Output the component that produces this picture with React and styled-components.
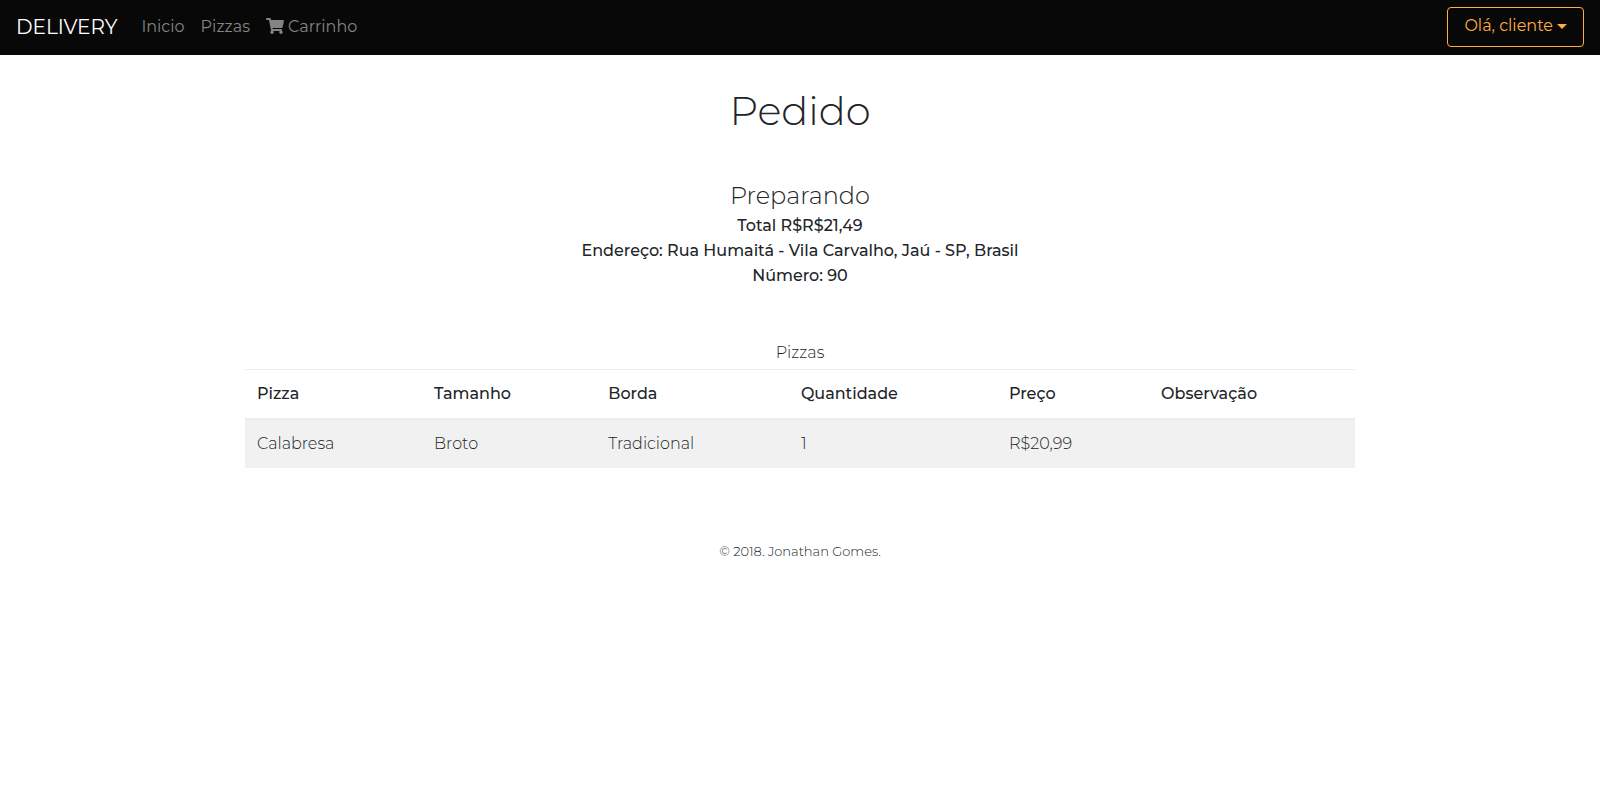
import React from "react";
import styled, { createGlobalStyle } from "styled-components";
import { FaShoppingCart } from "react-icons/fa";

const GlobalStyle = createGlobalStyle`
  *, *::before, *::after { box-sizing: border-box; }
  body {
    margin: 0;
    background: #fff;
    color: #212529;
    font-family: Montserrat, Inter, "Open Sans", sans-serif;
    font-size: 16px;
    font-weight: 300;
    line-height: 25px;
  }
`;

const Navbar = styled.header`
  display: flex;
  align-items: center;
  padding: 7px 16px 8px;
  background: #080808;
`;

const Brand = styled.a`
  margin-right: 16px;
  color: #fff;
  font-size: 20px;
  font-weight: 400;
  line-height: 30px;
  text-decoration: none;
`;

const Nav = styled.nav`
  display: flex;
  flex: 1;
`;

const NavLink = styled.a`
  display: inline-flex;
  align-items: center;
  gap: 4px;
  padding: 0 8px 2px;
  color: #848484;
  font-weight: 400;
  text-decoration: none;
`;

const UserButton = styled.button`
  display: inline-flex;
  align-items: center;
  gap: 4px;
  height: 40px;
  padding: 0 16px 4px;
  border: 1px solid #ffac41;
  border-radius: 4px;
  background: transparent;
  color: #ffac41;
  font: inherit;
  font-weight: 400;
  cursor: pointer;
`;

const Caret = styled.span`
  margin-top: 2px;
  border: 5px solid transparent;
  border-top-color: currentColor;
  border-bottom: 0;
`;

const Container = styled.main`
  width: 100%;
  max-width: 1140px;
  margin: 0 auto;
  padding: 32px 15px 0;
  text-align: center;
`;

const Title = styled.h1`
  margin: 0 0 48px;
  font-size: 40px;
  font-weight: 350;
  line-height: 48px;
`;

const Status = styled.h2`
  margin: 0 0 5px;
  font-size: 24px;
  font-weight: 350;
  line-height: 25px;
`;

const Summary = styled.section`
  margin-bottom: 48px;
`;

const Detail = styled.p`
  margin: 0;
  font-weight: 500;
`;

const Table = styled.table`
  width: 100%;
  table-layout: fixed;
  border-collapse: collapse;
  text-align: left;
`;

const Caption = styled.caption`
  padding: 4px 0;
  text-align: center;
`;

const Column = styled.col`
  width: ${({ $share }) => $share}%;
`;

const HeadCell = styled.th`
  padding: 12px;
  border-top: 1px solid #ececec;
  border-bottom: 2px solid #ececec;
  font-weight: 500;
  line-height: 24px;
`;

const Cell = styled.td`
  padding: 12px;
  background: #f1f1f1;
  line-height: 24px;
`;

const Footer = styled.footer`
  padding: 73px 16px 24px;
  font-size: 13px;
  line-height: 20px;
  text-align: center;
`;

const columns = [
  { name: "Pizza", share: 15.95 },
  { name: "Tamanho", share: 15.7 },
  { name: "Borda", share: 17.35 },
  { name: "Quantidade", share: 18.75 },
  { name: "Preço", share: 13.7 },
  { name: "Observação", share: 18.55 },
];

const items = [["Calabresa", "Broto", "Tradicional", "1", "R$20,99", ""]];

export default function App() {
  return (
    <>
      <GlobalStyle />
      <Navbar>
        <Brand href="#">DELIVERY</Brand>
        <Nav>
          <NavLink href="#inicio">Inicio</NavLink>
          <NavLink href="#pizzas">Pizzas</NavLink>
          <NavLink href="#carrinho">
            <FaShoppingCart size={18} aria-hidden="true" />
            Carrinho
          </NavLink>
        </Nav>
        <UserButton type="button" aria-haspopup="menu">
          Olá, cliente
          <Caret />
        </UserButton>
      </Navbar>
      <Container>
        <Title>Pedido</Title>
        <Summary>
          <Status>Preparando</Status>
          <Detail>Total R$R$21,49</Detail>
          <Detail>Endereço: Rua Humaitá - Vila Carvalho, Jaú - SP, Brasil</Detail>
          <Detail>Número: 90</Detail>
        </Summary>
        <Table>
          <Caption>Pizzas</Caption>
          <colgroup>
            {columns.map(({ name, share }) => (
              <Column key={name} $share={share} />
            ))}
          </colgroup>
          <thead>
            <tr>
              {columns.map(({ name }) => (
                <HeadCell key={name} scope="col">{name}</HeadCell>
              ))}
            </tr>
          </thead>
          <tbody>
            {items.map((item) => (
              <tr key={item[0]}>
                {item.map((value, i) => (
                  <Cell key={columns[i].name}>{value}</Cell>
                ))}
              </tr>
            ))}
          </tbody>
        </Table>
      </Container>
      <Footer>© 2018. Jonathan Gomes.</Footer>
    </>
  );
}
